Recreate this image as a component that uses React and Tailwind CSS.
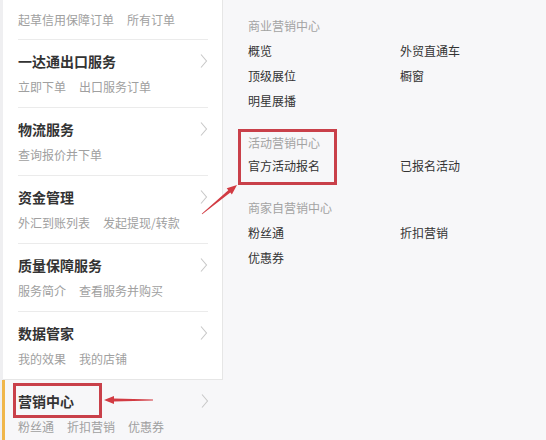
import React from 'react'

const font = { fontFamily: '"Noto Sans CJK SC", "Noto Sans", sans-serif' }

const rows = [
  { title: '一达通出口服务', links: ['立即下单', '出口服务订单'] },
  { title: '物流服务', links: ['查询报价并下单'] },
  { title: '资金管理', links: ['外汇到账列表', '发起提现/转款'] },
  { title: '质量保障服务', links: ['服务简介', '查看服务并购买'] },
  { title: '数据管家', links: ['我的效果', '我的店铺'], last: true },
]

const groups = [
  { head: '商业营销中心', items: [['概览', '外贸直通车'], ['顶级展位', '橱窗'], ['明星展播']], mt: 'mt-0', lh: 'leading-[25px]' },
  { head: '活动营销中心', items: [['官方活动报名', '已报名活动']], mt: 'mt-[17px]', lh: 'leading-[22px]' },
  { head: '商家自营销中心', items: [['粉丝通', '折扣营销'], ['优惠券']], mt: 'mt-[18px]', lh: 'leading-[25px]' },
]

function Chevron() {
  return (
    <svg width="8" height="16" viewBox="0 0 8 16" className="shrink-0">
      <path d="M1 1.5 L6.5 8 L1 14.5" fill="none" stroke="#c8c8c8" strokeWidth="1.1" />
    </svg>
  )
}

function Links({ links }) {
  return (
    <div className="flex gap-[13px] text-[12px] leading-[18px] text-[#a0a0a0]">
      {links.map((l) => (
        <span key={l}>{l}</span>
      ))}
    </div>
  )
}

function Row({ title, links, last }) {
  return (
    <div className={`ml-[15px] mr-[14px] pt-[11px] pb-[11px] ${last ? '' : 'border-b border-[#ebebeb]'}`}>
      <div className="flex items-center justify-between">
        <span className="text-[14px] leading-5 font-bold text-[#333]">{title}</span>
        <Chevron />
      </div>
      <div className="mt-[7px]">
        <Links links={links} />
      </div>
    </div>
  )
}

function Arrow({ x1, y1, x2, y2, className }) {
  const dx = x2 - x1
  const dy = y2 - y1
  const len = Math.hypot(dx, dy)
  const ux = dx / len
  const uy = dy / len
  const px = -uy
  const py = ux
  const hb = 10
  const bx = x2 - ux * hb
  const by = y2 - uy * hb
  const pts = [
    [x1 + px * 0.4, y1 + py * 0.4],
    [bx + px * 1.6, by + py * 1.6],
    [bx + px * 4, by + py * 4],
    [x2, y2],
    [bx - px * 4, by - py * 4],
    [bx - px * 1.6, by - py * 1.6],
    [x1 - px * 0.4, y1 - py * 0.4],
  ]
  return (
    <svg className={className} width="546" height="440" viewBox="0 0 546 440">
      <polygon points={pts.map((p) => p.join(',')).join(' ')} fill="#d23b43" />
    </svg>
  )
}

export default function App() {
  return (
    <div className="relative w-[546px] h-[440px] overflow-hidden bg-[#f7f7f9] flex" style={font}>
      <div className="w-[223px] shrink-0 flex flex-col pl-[3px] bg-[#efeff1]">
        <div className="bg-white border-r border-b border-[#e6e6e6]">
          <div className="ml-[15px] mr-[14px] pt-[11px] pb-[10px] border-b border-[#ebebeb]">
            <Links links={['起草信用保障订单', '所有订单']} />
          </div>
          {rows.map((r) => (
            <Row key={r.title} {...r} />
          ))}
        </div>
        <div className="flex-1 bg-[#f7f7f9] border-l-[3px] border-[#f0b64a] -ml-[1px]">
          <div className="ml-[13px] mr-[14px] pt-[11px]">
            <div className="flex items-center justify-between">
              <span className="text-[14px] leading-5 font-bold text-[#333]">营销中心</span>
              <Chevron />
            </div>
            <div className="mt-[7px]">
              <Links links={['粉丝通', '折扣营销', '优惠券']} />
            </div>
          </div>
        </div>
      </div>

      <div className="flex-1 pl-[25px] pt-[13px] text-[12px]">
        {groups.map((g) => (
          <div key={g.head} className={g.mt}>
            <div className="leading-[25px] text-[#a3a3a3]">{g.head}</div>
            {g.items.map((line, i) => (
              <div key={i} className={`flex text-[#333] ${g.lh}`}>
                <span className="w-[152px]">{line[0]}</span>
                {line[1] && <span>{line[1]}</span>}
              </div>
            ))}
          </div>
        ))}
      </div>

      <div className="absolute left-[13px] top-[383px] w-[89px] h-[35px] border-[3px] border-[#c9404a]" />
      <div className="absolute left-[238px] top-[129px] w-[99px] h-[56px] border-[3px] border-[#c9404a]" />
      <Arrow className="absolute left-0 top-0 pointer-events-none" x1={153} y1={400} x2={104} y2={400} />
      <Arrow className="absolute left-0 top-0 pointer-events-none" x1={202} y1={214} x2={237} y2={185} />
    </div>
  )
}
